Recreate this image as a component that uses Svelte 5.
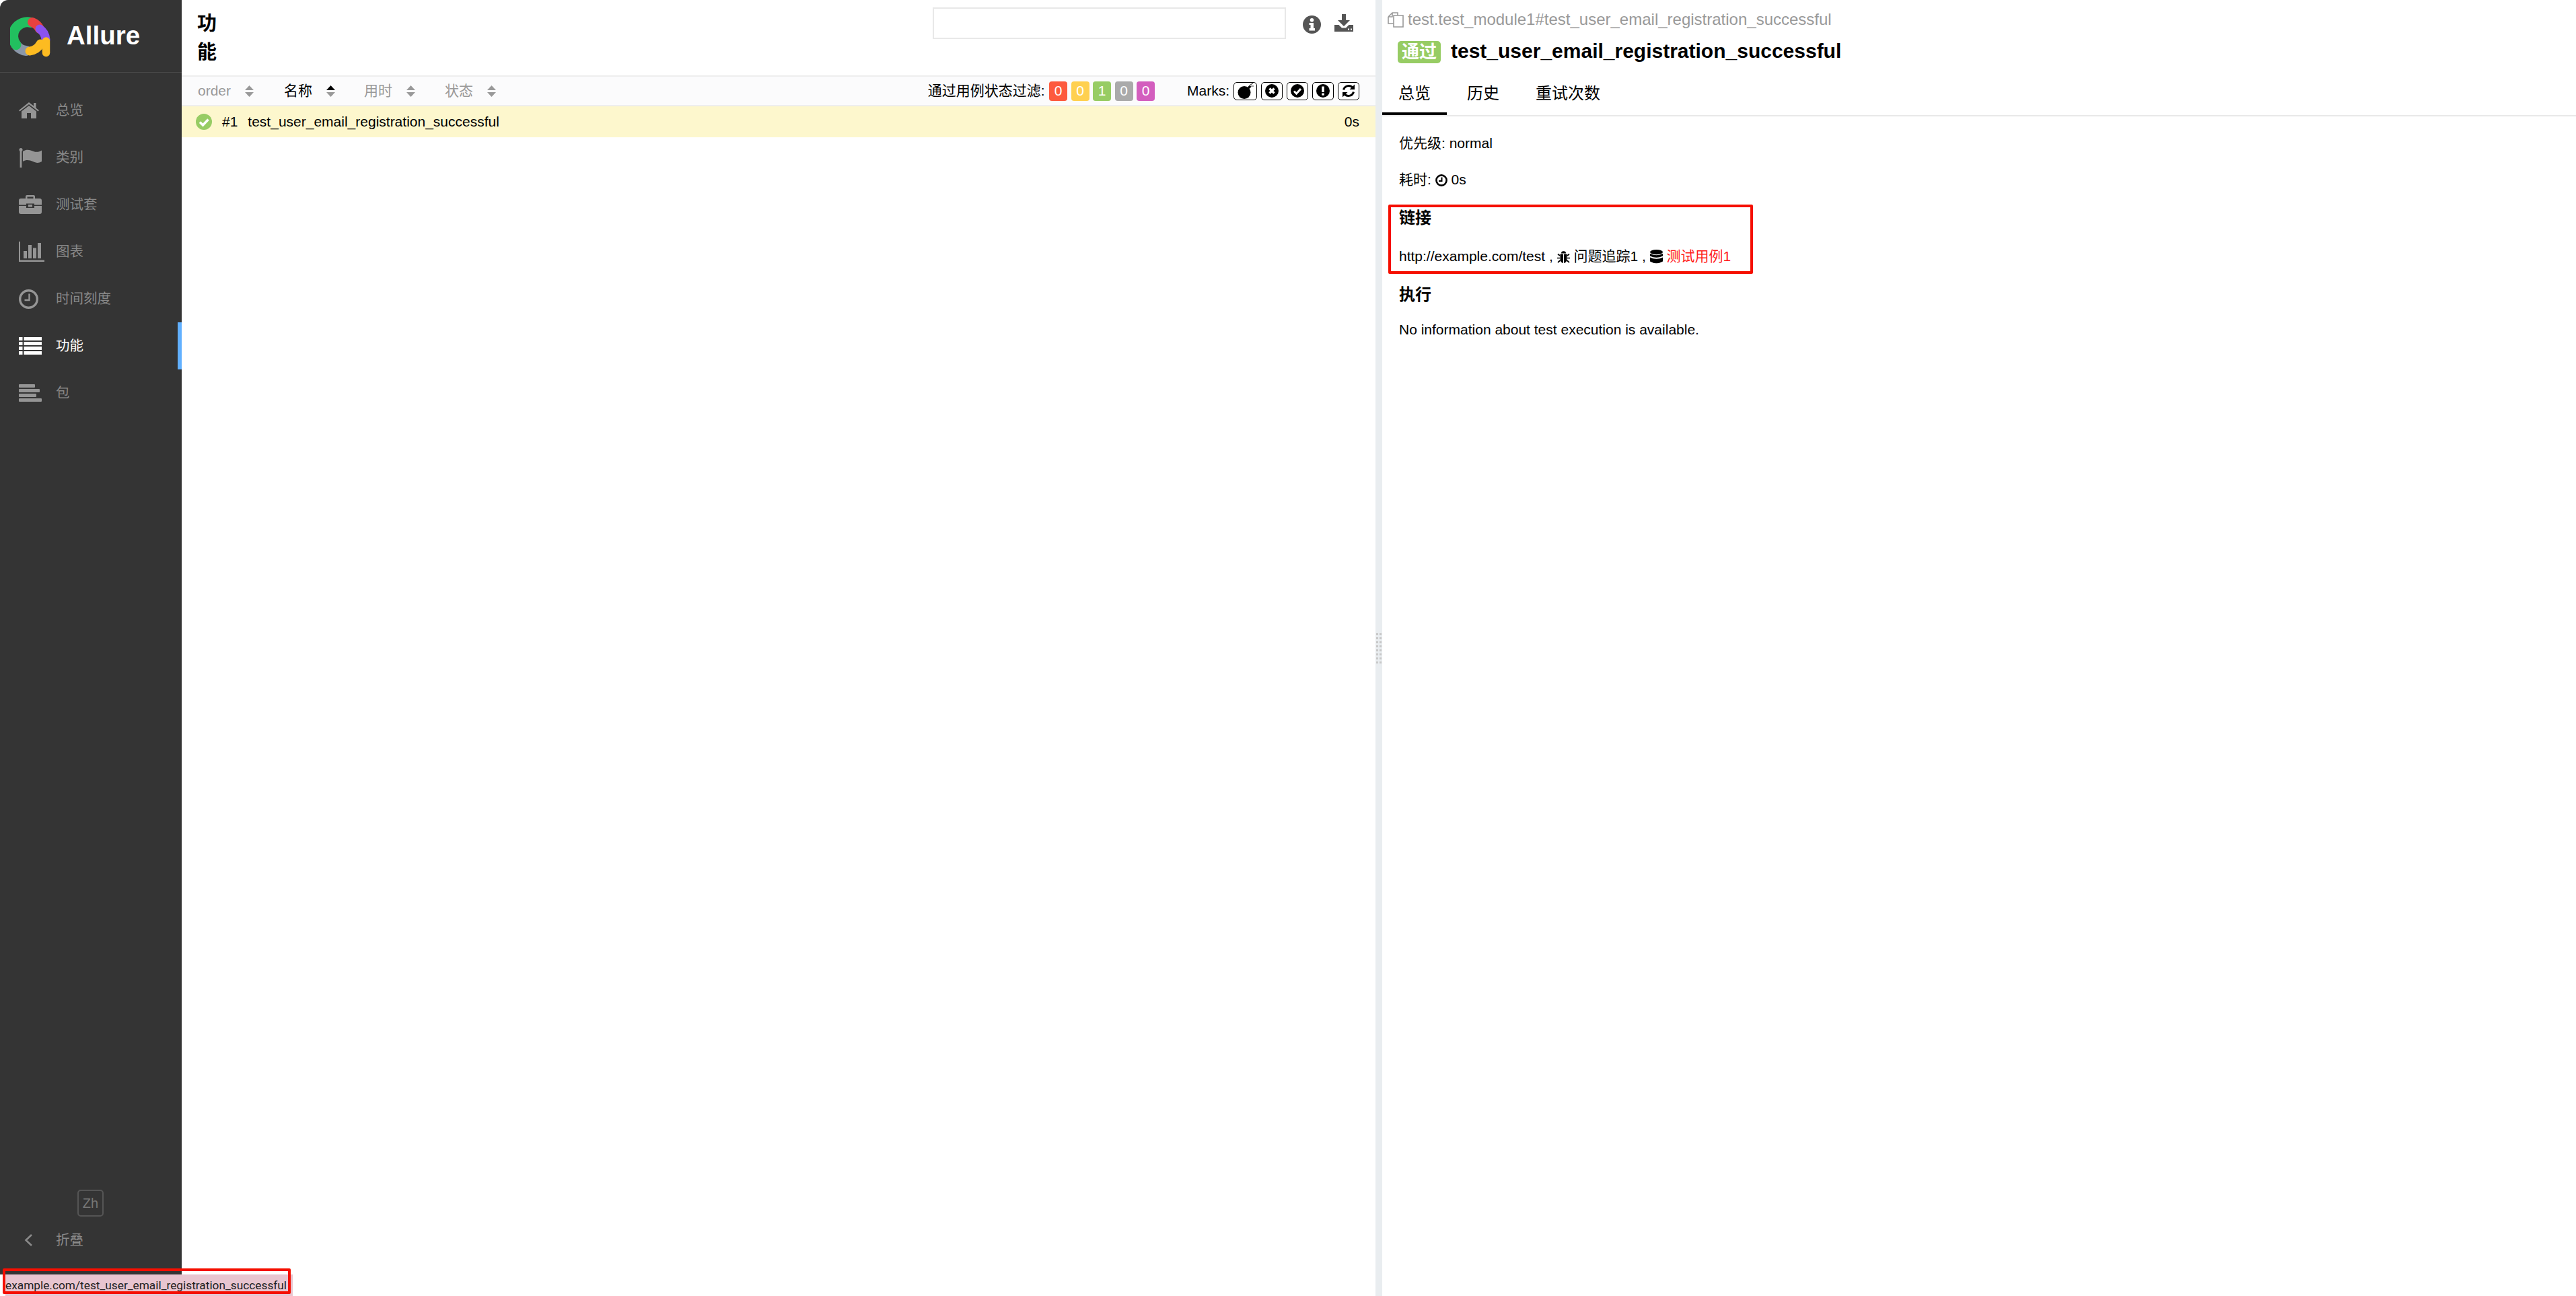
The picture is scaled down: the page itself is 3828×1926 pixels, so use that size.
<script lang="ts">
  const nav = [
    { label: '总览', icon: 'home' },
    { label: '类别', icon: 'flag' },
    { label: '测试套', icon: 'suite' },
    { label: '图表', icon: 'chart' },
    { label: '时间刻度', icon: 'clock' },
    { label: '功能', icon: 'list', active: true },
    { label: '包', icon: 'tree' }
  ];

  const columns = [
    { label: 'order', width: 128 },
    { label: '名称', width: 119, active: true },
    { label: '用时', width: 120 },
    { label: '状态', width: 100 }
  ];

  const counts = [
    { value: 0, color: '#fd5a3e' },
    { value: 0, color: '#ffd050' },
    { value: 1, color: '#97cc64' },
    { value: 0, color: '#aaaaaa' },
    { value: 0, color: '#d35ebe' }
  ];

  const grips = Array.from({ length: 16 });
</script>

<div class="page">
  <aside class="sidebar">
    <div class="brand">
      <svg class="logo" viewBox="5 9 60 60" fill="none" stroke-linecap="round">
        <path d="M14 50.7 A21 21 0 0 0 29 59.5" stroke="#8a97a8" stroke-width="15" />
        <path d="M14 50.7 A21 21 0 0 1 36 17.5" stroke="#22c05f" stroke-width="15" />
        <path d="M38 17 A21 21 0 0 1 49 27" stroke="#e8413f" stroke-width="14" />
        <path d="M49 27 Q57 32 58 43" stroke="#8b52f0" stroke-width="13" />
        <path d="M34 60 A21 21 0 0 0 50 49" stroke="#fdbb21" stroke-width="13" />
        <path d="M58.5 45 V62.5" stroke="#fdbb21" stroke-width="11.5" />
      </svg>
      <span class="brand-name">Allure</span>
    </div>

    <nav class="menu">
      {#each nav as item}
        <div class="menu-item" class:active={item.active}>
          <span class="menu-icon">
            {#if item.icon === 'home'}
              <svg width="30" height="24" viewBox="0 0 30 24" fill="currentColor">
                <path d="M15 0 L22 5.6 V1 H25.5 V8.4 L30 12 L28.6 13.5 L15 3 L1.4 13.5 L0 12 Z" />
                <path d="M15 5 L26 13.4 V24 H18 V16 H12 V24 H4 V13.4 Z" />
              </svg>
            {:else if item.icon === 'flag'}
              <svg width="34" height="29" viewBox="0 0 34 29" fill="currentColor">
                <circle cx="3" cy="2.5" r="2.5" />
                <rect x="1.6" y="3" width="2.8" height="26" />
                <path d="M6 5 C12 1 17 3 22 5 C26 6.5 30 6 34 3.5 V20 C29 23 25 22 21 20 C16 18 11 17 6 20 Z" />
              </svg>
            {:else if item.icon === 'suite'}
              <svg width="34" height="28" viewBox="0 0 34 28" fill="currentColor">
                <path d="M10 5 V2 Q10 0 12 0 H22 Q24 0 24 2 V5 H21.5 V2.5 H12.5 V5 Z" />
                <path d="M3 5 H31 Q34 5 34 8 V14.5 H23 V12.5 H11 V14.5 H0 V8 Q0 5 3 5 Z" />
                <path d="M0 16 H11 V19 H23 V16 H34 V25 Q34 28 31 28 H3 Q0 28 0 25 Z" />
                <rect x="14" y="14" width="6" height="3.5" />
              </svg>
            {:else if item.icon === 'chart'}
              <svg width="38" height="30" viewBox="0 0 38 30" fill="currentColor">
                <path d="M0 0 H2 V27.5 H38 V30 H0 Z" />
                <rect x="7" y="14" width="5" height="11" />
                <rect x="14" y="5" width="5" height="20" />
                <rect x="21" y="9.5" width="5" height="15.5" />
                <rect x="28" y="2" width="5" height="23" />
              </svg>
            {:else if item.icon === 'clock'}
              <svg width="29" height="29" viewBox="0 0 29 29" fill="none" stroke="currentColor">
                <circle cx="14.5" cy="14.5" r="12.8" stroke-width="3.4" />
                <path d="M15.5 6.5 V16 H8.5" stroke-width="2.4" />
              </svg>
            {:else if item.icon === 'list'}
              <svg width="34" height="26" viewBox="0 0 34 26" fill="currentColor">
                {#each [0, 7, 14, 21] as y}
                  <rect x="0" y={y} width="5.5" height="5" />
                  <rect x="7.5" y={y} width="26.5" height="5" />
                {/each}
              </svg>
            {:else}
              <svg width="34" height="26" viewBox="0 0 34 26" fill="currentColor">
                <rect x="0" y="0" width="24" height="5" rx="1" />
                <rect x="0" y="7" width="31" height="5" rx="1" />
                <rect x="0" y="14" width="26" height="5" rx="1" />
                <rect x="0" y="21" width="34" height="5" rx="1" />
              </svg>
            {/if}
          </span>
          <span class="menu-label">{item.label}</span>
        </div>
      {/each}
    </nav>

    <div class="sidebar-foot">
      <span class="lang">Zh</span>
      <div class="collapse">
        <svg width="12" height="18" viewBox="0 0 12 18" fill="none" stroke="currentColor" stroke-width="2.6">
          <path d="M11 1 L2.5 9 L11 17" />
        </svg>
        <span>折叠</span>
      </div>
    </div>
  </aside>

  <main class="list-pane">
    <header class="list-head">
      <h2 class="list-title">功能</h2>
      <div class="search"></div>
      <svg class="info-icon" width="27" height="27" viewBox="0 0 27 27">
        <circle cx="13.5" cy="13.5" r="13.5" fill="#555" />
        <circle cx="13.5" cy="6.8" r="2.8" fill="#fff" />
        <path d="M9.5 11 H16 V19 H18 V22.5 H9.5 V19 H11.5 V14 H9.5 Z" fill="#fff" />
      </svg>
      <svg class="download-icon" width="28" height="26" viewBox="0 0 28 26" fill="#555">
        <path d="M11 0 H17 V9 H23 L14 18 L5 9 H11 Z" />
        <path d="M0 16 H6.5 L11 20.5 H17 L21.5 16 H28 V26 H0 Z" />
        <rect x="20" y="21.5" width="2" height="2" fill="#fff" />
        <rect x="24" y="21.5" width="2" height="2" fill="#fff" />
      </svg>
    </header>

    <div class="toolbar">
      {#each columns as col}
        <div class="sort-col" class:active={col.active} style="width: {col.width}px">
          <span>{col.label}</span>
          <svg width="13" height="17" viewBox="0 0 13 17">
            <path d="M6.5 0 L13 7 H0 Z" fill={col.active ? '#000' : '#999'} />
            <path d="M0 10 H13 L6.5 17 Z" fill="#999" />
          </svg>
        </div>
      {/each}

      <div class="filter">
        <span class="filter-label">通过用例状态过滤:</span>
        {#each counts as c}
          <span class="count" style="background: {c.color}">{c.value}</span>
        {/each}
      </div>

      <div class="marks">
        <span class="marks-label">Marks:</span>
        <span class="mark wide">
          <svg width="24" height="24" viewBox="0 0 24 24">
            <circle cx="10" cy="14.5" r="9.5" fill="#000" />
            <path d="M15 6.5 L18 3.5 L20.5 6 L17.5 9 Z" fill="#000" />
            <path d="M18.5 3.5 L23 0.5 M20 5 H24" stroke="#444" stroke-width="1.2" />
          </svg>
        </span>
        <span class="mark">
          <svg width="20" height="20" viewBox="0 0 20 20">
            <circle cx="10" cy="10" r="10" fill="#000" />
            <path d="M6.5 6.5 L13.5 13.5 M13.5 6.5 L6.5 13.5" stroke="#fff" stroke-width="3.4" />
          </svg>
        </span>
        <span class="mark">
          <svg width="20" height="20" viewBox="0 0 20 20">
            <circle cx="10" cy="10" r="10" fill="#000" />
            <path d="M5 10.5 L8.5 14 L15 7" fill="none" stroke="#fff" stroke-width="3" />
          </svg>
        </span>
        <span class="mark">
          <svg width="20" height="20" viewBox="0 0 20 20">
            <circle cx="10" cy="10" r="10" fill="#000" />
            <rect x="8.2" y="3.5" width="3.6" height="8.5" fill="#fff" />
            <rect x="8.2" y="13.5" width="3.6" height="3.2" fill="#fff" />
          </svg>
        </span>
        <span class="mark">
          <svg width="20" height="20" viewBox="0 0 20 20" fill="none">
            <path d="M2.5 8.5 A8 8 0 0 1 15.5 4.5" stroke="#000" stroke-width="3" />
            <path d="M19 0.5 V8 H11.5 Z" fill="#000" />
            <path d="M17.5 11.5 A8 8 0 0 1 4.5 15.5" stroke="#000" stroke-width="3" />
            <path d="M1 19.5 V12 H8.5 Z" fill="#000" />
          </svg>
        </span>
      </div>
    </div>

    <div class="test-row">
      <svg width="24" height="24" viewBox="0 0 24 24">
        <circle cx="12" cy="12" r="12" fill="#97cc64" />
        <path d="M6 12.5 L10.5 17 L18.5 8.5" fill="none" stroke="#fff" stroke-width="3.6" />
      </svg>
      <span class="test-num">#1</span>
      <span class="test-name">test_user_email_registration_successful</span>
      <span class="test-time">0s</span>
    </div>
  </main>

  <div class="divider">
    <div class="grip">
      {#each grips as _}
        <i></i>
      {/each}
    </div>
  </div>

  <section class="detail">
    <div class="path">
      <svg width="24" height="24" viewBox="0 0 24 24" fill="none" stroke="#999" stroke-width="1.6">
        <path d="M1 8 L7 2 H15 V6 M1 8 V18 H9 M1 8 H7 V2" />
        <path d="M9 6 H23 V23 H9 Z" fill="#fff" />
      </svg>
      <span>test.test_module1#test_user_email_registration_successful</span>
    </div>

    <div class="title-row">
      <span class="badge">通过</span>
      <h2>test_user_email_registration_successful</h2>
    </div>

    <div class="tabs">
      <span class="tab current">总览</span>
      <span class="tab">历史</span>
      <span class="tab">重试次数</span>
    </div>

    <div class="body">
      <p>优先级: normal</p>
      <p class="gap-sm">
        耗时:
        <svg class="inline" width="18" height="18" viewBox="0 0 18 18" fill="none" stroke="#000">
          <circle cx="9" cy="9" r="7.6" stroke-width="2.6" />
          <path d="M9.5 4.5 V10 H5" stroke-width="2" />
        </svg>
        0s
      </p>

      <div class="links">
        <h3>链接</h3>
        <p class="gap">
          http://example.com/test ,
          <svg class="inline" width="19" height="18" viewBox="0 0 19 18" fill="#000">
            <path d="M6 3.5 A3.5 3.3 0 0 1 13 3.5 Z" />
            <path d="M4.5 4.5 H8.9 V18 Q5.5 17.5 4.5 13 Z" />
            <path d="M14.5 4.5 H10.1 V18 Q13.5 17.5 14.5 13 Z" />
            <path d="M4 7 L1 4.5 M15 7 L18 4.5 M4 10.5 H0 M15 10.5 H19 M4.5 14 L1 17 M14.5 14 L18 17" stroke="#000" stroke-width="1.7" fill="none" />
          </svg>
          问题追踪1 ,
          <svg class="inline db" width="19" height="21" viewBox="0 0 19 21" fill="#000">
            <ellipse cx="9.5" cy="3.6" rx="9.5" ry="3.6" />
            <path d="M0 6 Q9.5 10.5 19 6 V9.5 Q9.5 14 0 9.5 Z" />
            <path d="M0 11.5 Q9.5 16 19 11.5 V17.5 Q9.5 23 0 17.5 Z" />
          </svg>
          <span class="red">测试用例1</span>
        </p>
        <div class="annotation"></div>
      </div>

      <h3 class="gap">执行</h3>
      <p class="gap-xs">No information about test execution is available.</p>
    </div>
  </section>

  <div class="status-bar">
    <span>example.com/test_user_email_registration_successful</span>
    <div class="status-mark"></div>
  </div>
</div>

<style>
  :global(body) {
    margin: 0;
    background: #fff;
    font-family: 'Liberation Sans', 'Noto Sans CJK SC', sans-serif;
    color: #000;
    line-height: 1.2;
  }

  .page {
    position: relative;
    display: flex;
    align-items: flex-start;
    height: 1926px;
    overflow: hidden;
  }

  /* Sidebar */
  .sidebar {
    flex: 0 0 270px;
    height: 1894px;
    display: flex;
    flex-direction: column;
    background: #343434;
    border-top-left-radius: 12px;
    color: #999;
    font-size: 20.5px;
  }

  .brand {
    display: flex;
    align-items: center;
    gap: 24px;
    height: 106px;
    padding-left: 15px;
    padding-top: 1px;
    border-bottom: 1px solid #4a4a4a;
    box-sizing: content-box;
  }

  .logo {
    width: 60px;
    height: 60px;
    position: relative;
    top: 1px;
  }

  .brand-name {
    color: #fff;
    font-size: 38.5px;
    font-weight: 700;
    position: relative;
    top: -1px;
  }

  .menu {
    padding-top: 21px;
    flex: 1;
  }

  .menu-item {
    display: flex;
    align-items: center;
    height: 70px;
    padding-left: 28px;
    color: #959595;
  }

  .menu-label {
    color: #888;
  }

  .menu-item.active {
    color: #fff;
    box-shadow: inset -6px 0 0 #61b0ff;
  }

  .menu-item.active .menu-label {
    color: #fff;
  }

  .menu-icon {
    flex: 0 0 55px;
    display: flex;
    align-items: center;
  }

  .sidebar-foot {
    display: flex;
    flex-direction: column;
    padding-bottom: 31px;
  }

  .lang {
    align-self: flex-start;
    margin-left: 115px;
    width: 39px;
    height: 40px;
    box-sizing: border-box;
    border: 2px solid #555;
    border-radius: 5px;
    display: flex;
    align-items: center;
    justify-content: center;
    color: #777;
    font-size: 20px;
  }

  .collapse {
    display: flex;
    align-items: center;
    gap: 35px;
    height: 40px;
    margin-top: 15px;
    padding-left: 36px;
    color: #8a8a8a;
  }

  /* Left pane */
  .list-pane {
    flex: 0 0 1774px;
  }

  .list-head {
    display: flex;
    align-items: flex-start;
    height: 112px;
    padding: 0 33px 0 23px;
    border-bottom: 2px solid #eee;
    box-sizing: content-box;
  }

  .list-title {
    width: 29px;
    margin: 14px 0 0;
    font-size: 29px;
    line-height: 43px;
    font-weight: 700;
  }

  .search {
    width: 525px;
    height: 47px;
    margin: 11px 0 0 auto;
    box-sizing: border-box;
    border: 2px solid #e8e8e8;
  }

  .info-icon {
    margin: 23px 0 0 25px;
  }

  .download-icon {
    margin: 21px 0 0 20px;
  }

  .toolbar {
    display: flex;
    align-items: center;
    height: 42px;
    padding: 0 24px;
    background: #fbfbfc;
    border-bottom: 2px solid #eee;
    font-size: 21px;
    box-sizing: content-box;
  }

  .sort-col {
    display: flex;
    align-items: center;
    gap: 21px;
    color: #999;
  }

  .sort-col.active {
    color: #000;
  }

  .filter {
    display: flex;
    align-items: center;
    gap: 5.5px;
    margin-left: auto;
  }

  .filter-label {
    margin-right: 1px;
  }

  .count {
    width: 27px;
    height: 29px;
    border-radius: 4px;
    display: flex;
    align-items: center;
    justify-content: center;
    color: #fff;
    font-size: 21px;
  }

  .marks {
    display: flex;
    align-items: center;
    gap: 6px;
    margin-left: 48px;
  }

  .mark {
    width: 32px;
    height: 27px;
    box-sizing: border-box;
    border: 1.5px solid #000;
    border-radius: 5px;
    background: #fff;
    display: flex;
    align-items: center;
    justify-content: center;
  }

  .mark.wide {
    width: 35px;
  }

  .test-row {
    display: flex;
    align-items: center;
    height: 46px;
    padding: 0 24px 0 21px;
    background: #fdf7cd;
    font-size: 21px;
  }

  .test-num {
    margin-left: 15px;
  }

  .test-name {
    margin-left: 15px;
  }

  .test-time {
    margin-left: auto;
  }

  .divider {
    flex: 0 0 10px;
    align-self: stretch;
    background: #e9edf0;
    display: flex;
    align-items: center;
    justify-content: center;
  }

  .grip {
    display: grid;
    grid-template-columns: 3px 3px;
    grid-auto-rows: 3px;
    column-gap: 2px;
    row-gap: 3px;
  }

  .grip i {
    background: #c8c8c8;
  }

  /* Right pane */
  .detail {
    flex: 1;
    min-width: 0;
  }

  .path {
    display: flex;
    align-items: center;
    gap: 6px;
    height: 24px;
    margin: 17px 0 0 8px;
    color: #999;
    font-size: 24px;
  }

  .title-row {
    display: flex;
    align-items: center;
    gap: 15px;
    height: 33px;
    margin: 20px 0 0 23px;
  }

  .title-row h2 {
    margin: 0;
    font-size: 30px;
    font-weight: 700;
    position: relative;
    top: -2px;
  }

  .badge {
    width: 64px;
    height: 33px;
    border-radius: 5px;
    background: #97cc64;
    color: #fff;
    font-size: 26px;
    font-weight: 700;
    display: flex;
    align-items: center;
    justify-content: center;
  }

  .tabs {
    display: flex;
    gap: 6px;
    height: 79px;
    padding-top: 26px;
    box-sizing: border-box;
    border-bottom: 2px solid #e8e8e8;
  }

  .tab {
    box-sizing: border-box;
    height: 51px;
    padding: 0 24px;
    line-height: 38px;
    font-size: 24px;
  }

  .tab.current {
    border-bottom: 4px solid #000;
  }

  .body {
    padding: 23px 0 0 25px;
    font-size: 21px;
    line-height: 34px;
  }

  p {
    margin: 0;
  }

  h3 {
    margin: 0;
    font-size: 24px;
    font-weight: 700;
    line-height: 34px;
  }

  .gap-sm {
    margin-top: 20px;
  }

  .gap {
    margin-top: 23px;
  }

  .gap-xs {
    margin-top: 18px;
  }

  .links {
    position: relative;
    margin-top: 23px;
  }

  .inline {
    vertical-align: -3px;
  }

  .inline.db {
    vertical-align: -4px;
  }

  .red {
    color: #ff1a1a;
  }

  /* red annotation boxes over the capture */
  .annotation {
    position: absolute;
    left: -16px;
    top: -3px;
    width: 542px;
    height: 103px;
    box-sizing: border-box;
    border: 4px solid #f50f00;
    border-radius: 2px;
  }

  .status-bar {
    position: absolute;
    left: 8px;
    bottom: 0;
    width: 427px;
    height: 32px;
    background: #e8c5d0;
    font-family: 'Roboto', sans-serif;
    font-size: 17.3px;
    line-height: 32px;
    color: #222;
    white-space: nowrap;
  }

  .status-mark {
    position: absolute;
    left: -4px;
    top: -9px;
    width: 428px;
    height: 38px;
    box-sizing: border-box;
    border: 4px solid #f50f00;
    border-radius: 2px;
  }
</style>
